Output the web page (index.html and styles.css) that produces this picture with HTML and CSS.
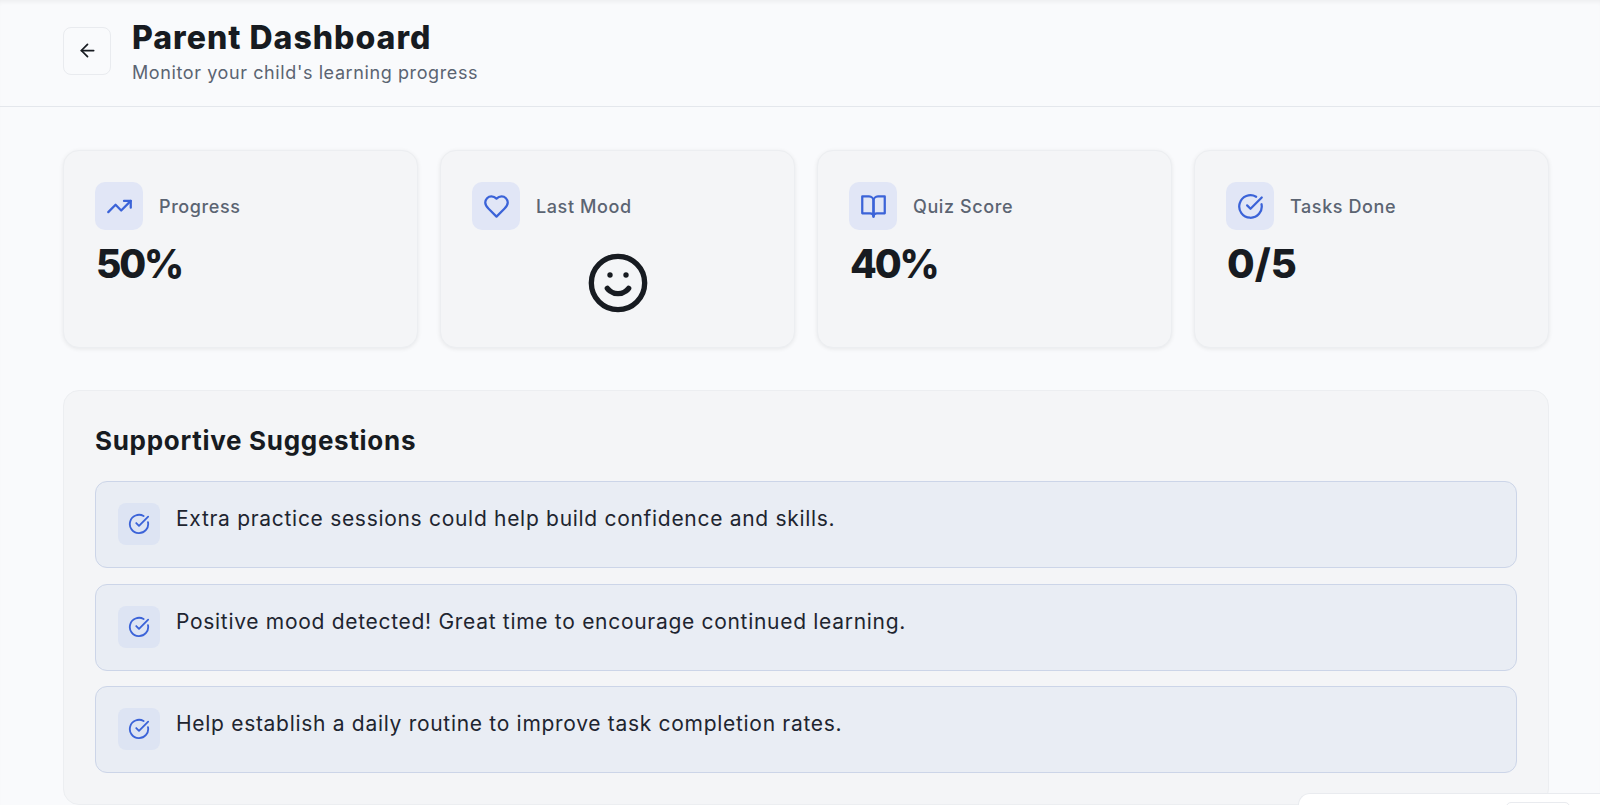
FILE: index.html
```html
<!DOCTYPE html>
<html lang="en">
<head>
    <meta charset="UTF-8">
    <title>Parent Dashboard</title>
    <link rel="stylesheet" href="styles.css">
</head>
<body>

    <!-- Header -->
    <header class="header">
        <button class="back-btn" aria-label="Back">
            <svg class="back-icon" viewBox="0 0 24 24"><path d="M12 19l-7-7 7-7"/><path d="M19 12H5"/></svg>
        </button>
        <div class="header-text">
            <h1 class="title">Parent Dashboard</h1>
            <p class="subtitle">Monitor your child's learning progress</p>
        </div>
    </header>

    <main class="main">
        <!-- Stat cards -->
        <section class="stats">
            <div class="card">
                <div class="card-head">
                    <span class="icon-box">
                        <svg class="icon" viewBox="0 0 24 24"><path d="M22 7l-8.500 8.500-5-5L2 17"/><path d="M16 7h6v6"/></svg>
                    </span>
                    <span class="card-label">Progress</span>
                </div>
                <div class="card-value">50%</div>
            </div>
            <div class="card">
                <div class="card-head">
                    <span class="icon-box">
                        <svg class="icon" viewBox="0 0 24 24"><path d="M19 14c1.490-1.460 3-3.210 3-5.500A5.500 5.500 0 0 0 16.500 3c-1.760 0-3 .5-4.500 2-1.500-1.500-2.740-2-4.500-2A5.500 5.500 0 0 0 2 8.500c0 2.300 1.500 4.050 3 5.500l7 7z"/></svg>
                    </span>
                    <span class="card-label">Last Mood</span>
                </div>
                <div class="mood">
                    <svg class="mood-icon" viewBox="0 0 24 24"><circle cx="12" cy="12" r="10"/><path d="M8 14s1.500 2 4 2 4-2 4-2"/><path d="M9 9h.01"/><path d="M15 9h.01"/></svg>
                </div>
            </div>
            <div class="card">
                <div class="card-head">
                    <span class="icon-box">
                        <svg class="icon" viewBox="0 0 24 24"><path d="M2 3h6a4 4 0 0 1 4 4v14a3 3 0 0 0-3-3H2z"/><path d="M22 3h-6a4 4 0 0 0-4 4v14a3 3 0 0 1 3-3h7z"/></svg>
                    </span>
                    <span class="card-label">Quiz Score</span>
                </div>
                <div class="card-value">40%</div>
            </div>
            <div class="card">
                <div class="card-head">
                    <span class="icon-box">
                        <svg class="icon" viewBox="0 0 24 24"><path d="M21.800 10A10 10 0 1 1 17 3.340"/><path d="M9 11l3 3L22 4"/></svg>
                    </span>
                    <span class="card-label">Tasks Done</span>
                </div>
                <div class="card-value card-value-count">0/5</div>
            </div>
        </section>

        <!-- Suggestions -->
        <section class="panel">
            <h2 class="panel-title">Supportive Suggestions</h2>
            <div class="suggestion">
                <span class="suggestion-icon">
                    <svg class="icon-small" viewBox="0 0 24 24"><path d="M21.800 10A10 10 0 1 1 17 3.340"/><path d="M9 11l3 3L22 4"/></svg>
                </span>
                <p class="suggestion-text">Extra practice sessions could help build confidence and skills.</p>
            </div>
            <div class="suggestion">
                <span class="suggestion-icon">
                    <svg class="icon-small" viewBox="0 0 24 24"><path d="M21.800 10A10 10 0 1 1 17 3.340"/><path d="M9 11l3 3L22 4"/></svg>
                </span>
                <p class="suggestion-text">Positive mood detected! Great time to encourage continued learning.</p>
            </div>
            <div class="suggestion">
                <span class="suggestion-icon">
                    <svg class="icon-small" viewBox="0 0 24 24"><path d="M21.800 10A10 10 0 1 1 17 3.340"/><path d="M9 11l3 3L22 4"/></svg>
                </span>
                <p class="suggestion-text">Help establish a daily routine to improve task completion rates.</p>
            </div>
        </section>
    </main>

    <!-- Widget peeking in at the bottom corner -->
    <div class="corner-widget"><span class="corner-pill"></span></div>

</body>
</html>
```

FILE: styles.css
```css
* {
    box-sizing: border-box;
}

html, body {
    height: 100%;
}

body {
    margin: 0;
    overflow: hidden;
    background-color: #f9fafc;
    color: #171b21;
    font-family: 'Inter', 'Noto Sans', sans-serif;
    box-shadow: inset 0 4px 4px -2px rgba(0, 0, 0, 0.05);
}

.header {
    display: flex;
    align-items: center;
    gap: 21px;
    height: 107px;
    padding: 0 63px 5px;
    border-bottom: 1px solid #e4e7ec;
}

.header-text {
    padding-top: 4px;
}

.back-btn {
    display: flex;
    align-items: center;
    justify-content: center;
    width: 48px;
    height: 48px;
    padding: 0;
    background: #f9fafc;
    border: 1px solid #e9ebef;
    border-radius: 8px;
}

.back-icon {
    width: 21px;
    height: 21px;
    fill: none;
    stroke: #171b21;
    stroke-width: 2;
    stroke-linecap: round;
    stroke-linejoin: round;
}

.title {
    margin: 0;
    font-size: 32px;
    line-height: 36px;
    font-weight: 800;
    letter-spacing: 1px;
}

.subtitle {
    margin: 5px 0 0;
    font-size: 18px;
    line-height: 24px;
    color: #5b6472;
    letter-spacing: 0.6px;
}

.main {
    padding: 43px 51px 0 63px;
}

.stats {
    display: grid;
    grid-template-columns: repeat(4, 355px);
    gap: 22px;
}

.card {
    height: 198px;
    padding: 31px;
    background-color: #f4f5f7;
    border: 1px solid #eceef1;
    border-radius: 16px;
    box-shadow: 0 1px 4px rgba(0, 0, 0, 0.08);
}

.card-head {
    display: flex;
    align-items: center;
    gap: 16px;
}

.icon-box {
    display: flex;
    align-items: center;
    justify-content: center;
    width: 48px;
    height: 48px;
    background-color: #e1e6f6;
    border-radius: 10px;
}

.icon {
    width: 27px;
    height: 27px;
    fill: none;
    stroke: #3b63d8;
    stroke-width: 2;
    stroke-linecap: round;
    stroke-linejoin: round;
}

.card-label {
    font-size: 18px;
    font-weight: 500;
    color: #5b6472;
    letter-spacing: 0.6px;
}

.card-value {
    margin: 7px 0 0 1px;
    font-size: 39px;
    line-height: 54px;
    font-weight: 800;
    letter-spacing: -2.200px;
}

.card-value-count {
    font-size: 40px;
    letter-spacing: 0;
}

.mood {
    display: flex;
    justify-content: center;
    margin-top: 21px;
}

.mood-icon {
    width: 64px;
    height: 64px;
    fill: none;
    stroke: #171b21;
    stroke-width: 2;
    stroke-linecap: round;
    stroke-linejoin: round;
}

.panel {
    margin-top: 42px;
    height: 415px;
    padding: 32px 31px 0;
    background-color: #f4f5f7;
    border: 1px solid #eceef1;
    border-radius: 16px;
}

.panel-title {
    margin: 0 0 22px;
    font-size: 26px;
    line-height: 36px;
    font-weight: 700;
    letter-spacing: 0.7px;
}

.suggestion {
    display: flex;
    gap: 16px;
    height: 87px;
    margin-bottom: 15.500px;
    padding: 21px 22px;
    background-color: #e9edf4;
    border: 1px solid #ccd5e8;
    border-radius: 12px;
}

.suggestion-icon {
    display: flex;
    flex-shrink: 0;
    align-items: center;
    justify-content: center;
    width: 42px;
    height: 42px;
    background-color: #dde4f3;
    border-radius: 8px;
}

.icon-small {
    width: 22px;
    height: 22px;
    fill: none;
    stroke: #3b63d8;
    stroke-width: 2;
    stroke-linecap: round;
    stroke-linejoin: round;
}

.suggestion-text {
    margin: 1px 0 0;
    font-size: 21px;
    line-height: 30px;
    color: #1e2530;
    letter-spacing: 0.7px;
}

.corner-widget {
    position: fixed;
    right: 0;
    bottom: 0;
    width: 302px;
    height: 12px;
    background-color: #fff;
    border: 1px solid #e9ebef;
    border-right: none;
    border-bottom: none;
    border-radius: 12px 0 0 0;
}

.corner-pill {
    position: absolute;
    top: 8px;
    left: 207px;
    width: 64px;
    height: 10px;
    border: 1px solid #e9ebef;
    border-radius: 8px;
}
```
